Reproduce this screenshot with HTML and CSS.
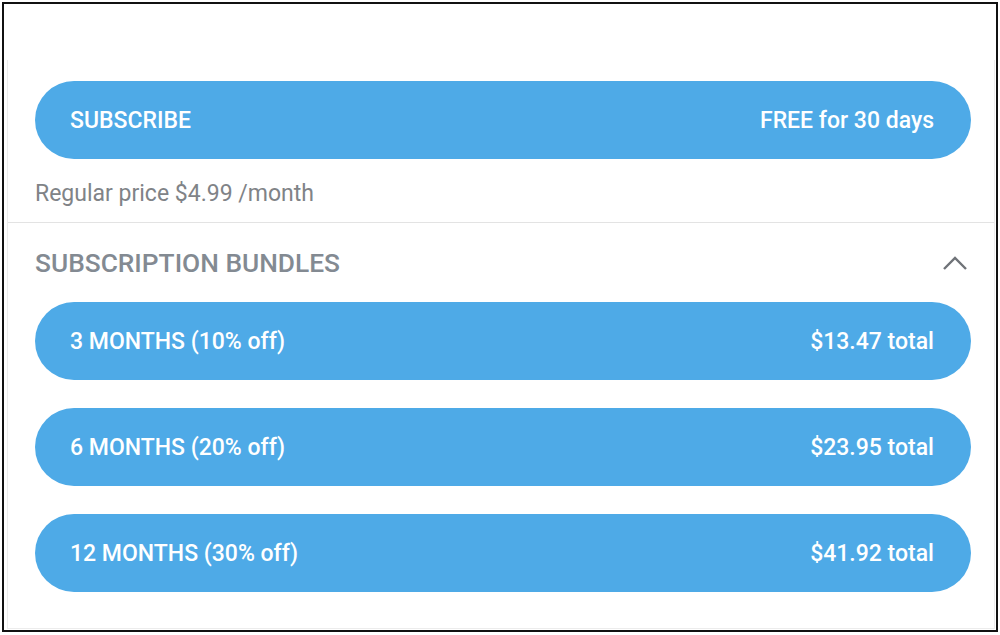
FILE: index.html
```html
<!DOCTYPE html>
<html lang="en">
<head>
  <meta charset="UTF-8" />
  <title>Subscribe</title>
  <link rel="stylesheet" href="styles.css">
</head>
<body>

<div class="frame">
  <div class="card">
    <div class="plan">
      <a class="pill" href="#"><span>SUBSCRIBE</span><span>FREE for 30 days</span></a>
      <p class="regular">Regular price $4.99 /month</p>
    </div>

    <div class="bundles">
      <div class="bundles-head">
        <h2>SUBSCRIPTION BUNDLES</h2>
        <svg class="chevron" width="26" height="18" viewBox="0 0 26 18">
          <path d="M2 15 L13 4 L24 15" fill="none" stroke="#6f7378" stroke-width="2.4"/>
        </svg>
      </div>
      <div class="bundle-list">
        <a class="pill" href="#"><span>3 MONTHS (10% off)</span><span>$13.47 total</span></a>
        <a class="pill" href="#"><span>6 MONTHS (20% off)</span><span>$23.95 total</span></a>
        <a class="pill" href="#"><span>12 MONTHS (30% off)</span><span>$41.92 total</span></a>
      </div>
    </div>
  </div>
</div>

</body>
</html>
```

FILE: styles.css
```css
body {
  margin: 0;
  padding: 2px;
  font-family: Roboto, 'Liberation Sans', sans-serif;
  background: white;
}
.frame {
  height: 626px;
  border: 2px solid #111;
  background: white;
}
.card {
  margin: 56px 1px 0 3px;
  height: 568px;
  border-left: 1px solid #ececec;
  border-right: 1px solid #ececec;
  border-bottom: 1px solid #ececec;
}
.plan {
  padding: 21px 23px 0 27px;
}
.pill {
  display: flex;
  justify-content: space-between;
  align-items: center;
  height: 78px;
  padding: 0 37px 0 35px;
  border-radius: 39px;
  background: #4eaae7;
  color: white;
  font-size: 23px;
  font-weight: 500;
  text-decoration: none;
}
.regular {
  margin: 20px 0 0;
  line-height: 30px;
  font-size: 23px;
  color: #808387;
}
.bundles {
  margin-top: 13px;
  border-top: 1px solid #e3e3e3;
  padding: 24px 23px 0 27px;
}
.bundles-head {
  display: flex;
  justify-content: space-between;
  align-items: center;
  height: 32px;
}
.bundles-head h2 {
  margin: 0;
  font-size: 26.3px;
  font-weight: 500;
  color: #838a92;
}
.chevron {
  margin-right: 3px;
}
.bundle-list {
  display: flex;
  flex-direction: column;
  gap: 28px;
  margin-top: 23px;
}
```
